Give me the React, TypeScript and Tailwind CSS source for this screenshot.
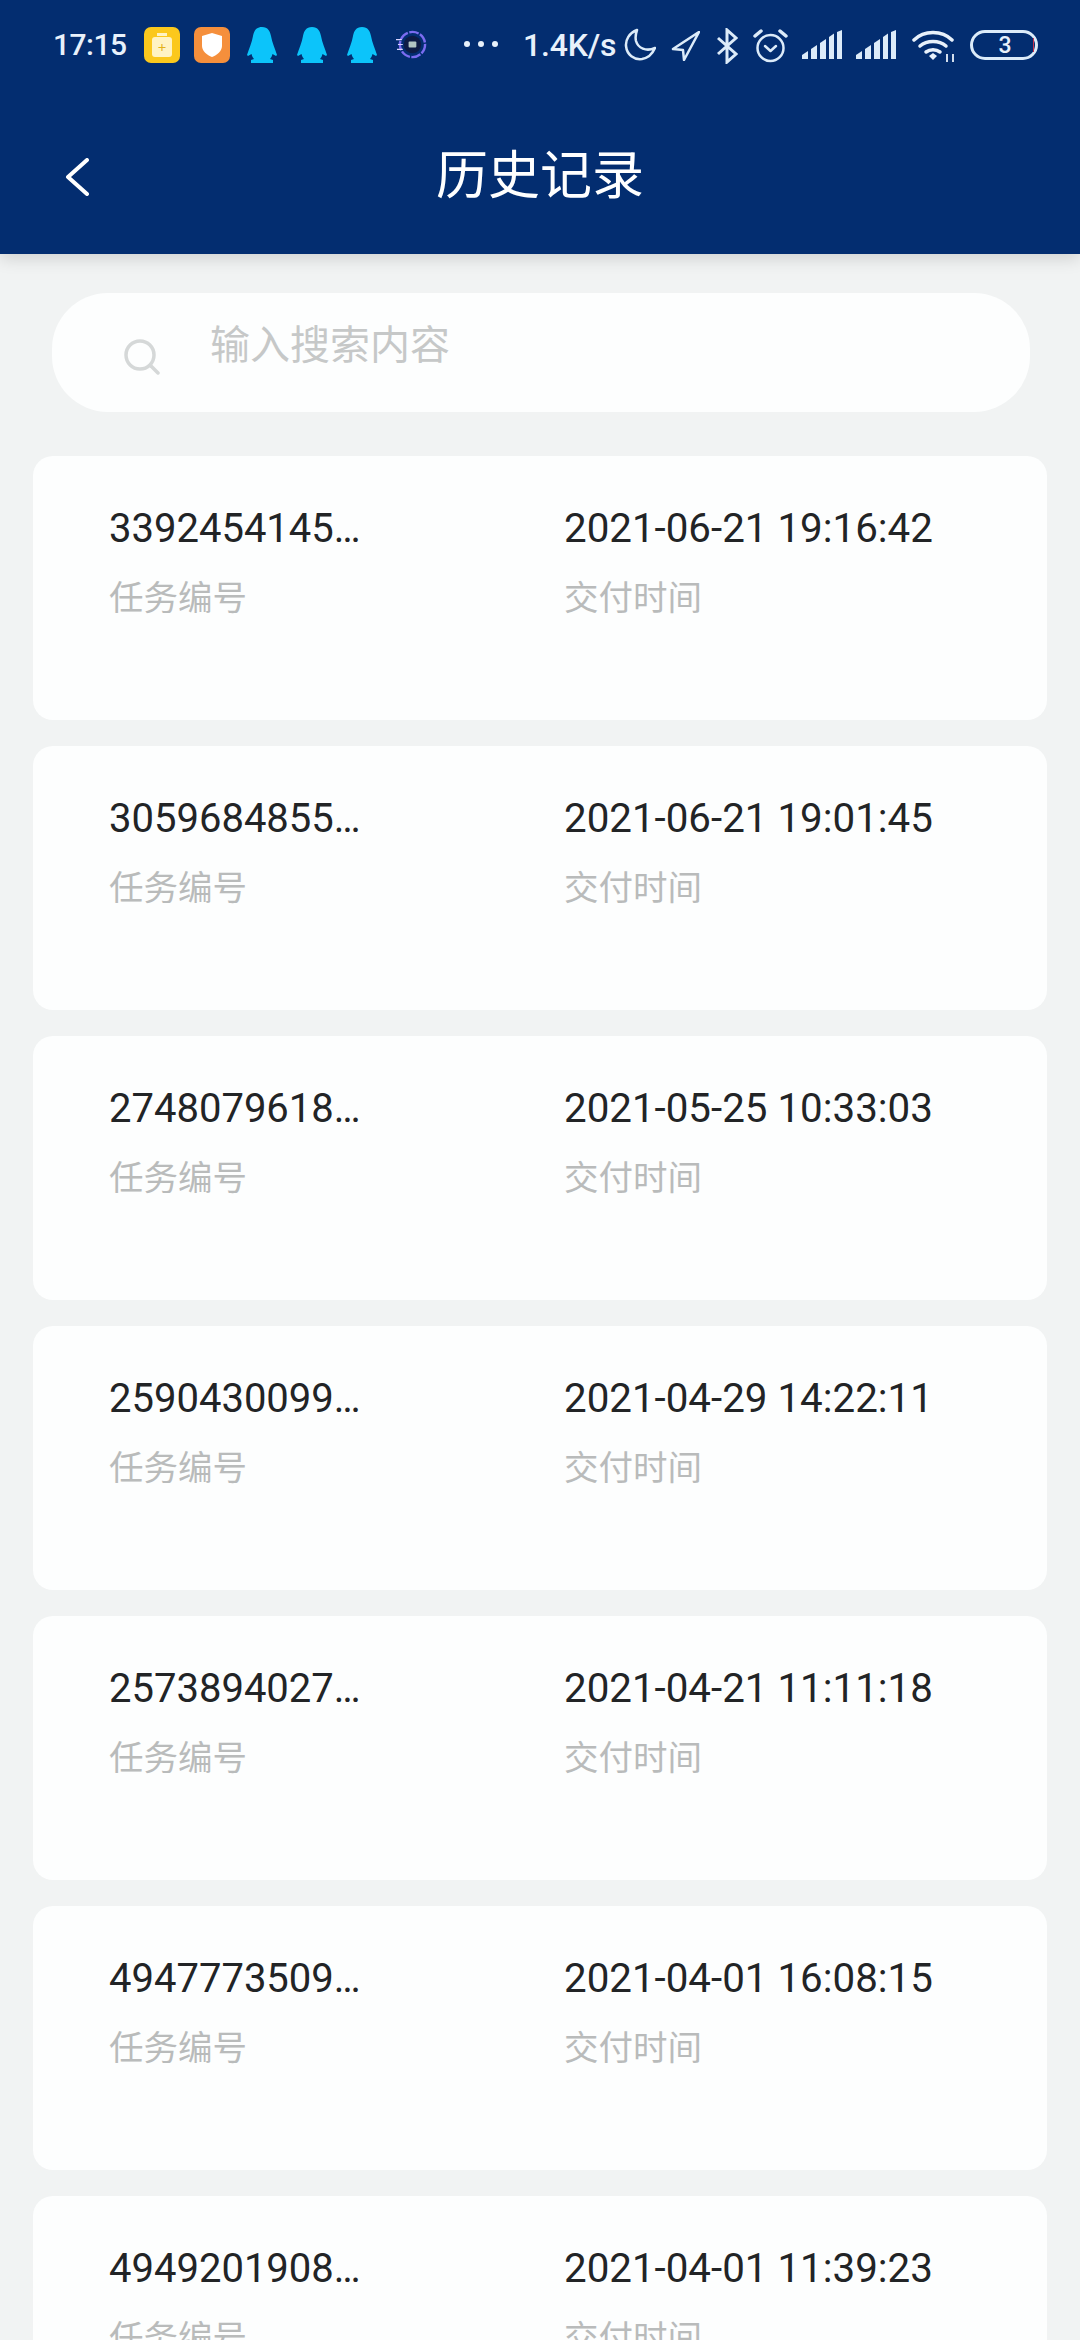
import React from 'react';

const cjk = "font-['Roboto','Noto_Sans_CJK_SC',sans-serif]";
const roboto = "font-['Roboto',sans-serif]";

interface HistoryRecord {
  taskId: string;
  deliveredAt: string;
}

const records: HistoryRecord[] = [
  { taskId: '3392454145…', deliveredAt: '2021-06-21 19:16:42' },
  { taskId: '3059684855…', deliveredAt: '2021-06-21 19:01:45' },
  { taskId: '2748079618…', deliveredAt: '2021-05-25 10:33:03' },
  { taskId: '2590430099…', deliveredAt: '2021-04-29 14:22:11' },
  { taskId: '2573894027…', deliveredAt: '2021-04-21 11:11:18' },
  { taskId: '4947773509…', deliveredAt: '2021-04-01 16:08:15' },
  { taskId: '4949201908…', deliveredAt: '2021-04-01 11:39:23' },
];

const Penguin = () => (
  <svg viewBox="0 0 30 36" className="w-[30px] h-[36px]" fill="#0cc4fa">
    <path d="M15 0C21 0 23 4 24 9C25 15 28 22 30 28L29 29L25.500 27C25 29 24 31 23 32L26 33L26 36L4 36L4 33L7 32C6 31 5 29 4.500 27L1 29L0 28C2 22 5 15 6 9C7 4 9 0 15 0Z" />
  </svg>
);

const Signal = ({ className }: { className: string }) => (
  <svg viewBox="0 0 40 29" className={`w-[40px] h-[29px] mt-[3px] ${className}`} fill="#dcebf9">
    <path d="M0 29V25L6 21V29Z" />
    <path d="M9 29V19L15 15V29Z" />
    <path d="M18 29V13L24 9V29Z" />
    <path d="M27 29V7L32 3.500V29Z" />
    <path d="M35 29V2L40 0V29Z" />
  </svg>
);

const StatusBar = () => (
  <div className="h-[80px] pt-[27px] pl-[53px] flex items-start text-[#e8f1fb]">
    <span className={`text-[30px] leading-[36px] font-medium w-[91px] tracking-[-0.5px] ${roboto}`}>17:15</span>
    <div className="w-[36px] h-[36px] rounded-[7px] bg-[#fbc81d] flex flex-col items-center justify-center">
      <div className="w-[10px] h-[3px] bg-[#fff3c4]" />
      <div className="mt-[1px] w-[20px] h-[20px] rounded-[3px] bg-[#fff3c4] flex items-center justify-center text-[#e3b21a] text-[15px] leading-none">+</div>
    </div>
    <div className="ml-[14px] w-[36px] h-[36px] rounded-[7px] bg-[#f58f3c] flex items-center justify-center">
      <svg viewBox="0 0 20 24" className="w-[20px] h-[24px]" fill="#fff">
        <path d="M10 0l10 3v10c0 5-5 9-10 11C5 22 0 18 0 13V3z" />
      </svg>
    </div>
    <div className="ml-[17px] flex gap-[20px]">
      <Penguin />
      <Penguin />
      <Penguin />
    </div>
    <svg viewBox="0 0 32 32" className="ml-[19px] mt-[2px] w-[31px] h-[31px]" fill="none">
      <circle cx="17" cy="16" r="13" stroke="#7b6cf0" strokeWidth="2.500" strokeDasharray="10 1.500" />
      <circle cx="17" cy="16" r="9" fill="#0e1c45" />
      <path d="M0 11h6M2 16h5M1 21h6" stroke="#d9d4ff" strokeWidth="1.200" />
      <rect x="13" y="13" width="8" height="6" rx="1" fill="#cfe3d8" opacity="0.85" />
    </svg>
    <div className="ml-[37px] mt-[14px] flex gap-[8px]">
      <span className="w-[6px] h-[6px] rounded-full bg-[#e8f1fb]" />
      <span className="w-[6px] h-[6px] rounded-full bg-[#e8f1fb]" />
      <span className="w-[6px] h-[6px] rounded-full bg-[#e8f1fb]" />
    </div>
    <span className={`ml-[25px] w-[91px] text-[32px] leading-[36px] font-medium tracking-[-0.2px] whitespace-nowrap ${roboto}`}>1.4K/s</span>
    <svg viewBox="0 0 32 33" className="ml-[10px] mt-[1px] w-[32px] h-[33px]" fill="none" stroke="#dcebf9" strokeWidth="2.500" strokeLinejoin="round">
      <path d="M13 2C5 5 1.500 12 2 18C3 27 10 32 18 31C24 30 28 27 31 20C22 24 14 20 12 13C11 9 12 5 13 2Z" />
    </svg>
    <svg viewBox="0 0 29 30" className="ml-[15px] mt-[4px] w-[29px] h-[30px]" fill="none" stroke="#dcebf9" strokeWidth="2.500" strokeLinejoin="round">
      <path d="M28 1L2 18L12 19L13 29Z" />
    </svg>
    <svg viewBox="0 0 22 36" className="ml-[16px] mt-[1px] w-[22px] h-[36px]" fill="none" stroke="#dcebf9" strokeWidth="3">
      <path d="M2 10L20 26L11 34V2L20 10L2 26" />
    </svg>
    <svg viewBox="0 0 35 35" className="ml-[15px] mt-[1px] w-[35px] h-[35px]" fill="none" stroke="#dcebf9" strokeWidth="2.500" strokeLinecap="round" strokeLinejoin="round">
      <circle cx="17.500" cy="20" r="13" />
      <path d="M12 18l5.500 5 5.500-5" />
      <path d="M2 8l6-5" strokeWidth="3.500" />
      <path d="M33 8l-6-5" strokeWidth="3.500" />
    </svg>
    <Signal className="ml-[14px]" />
    <Signal className="ml-[14px]" />
    <svg viewBox="0 0 43 33" className="ml-[16px] mt-[3px] w-[43px] h-[33px]" fill="none" stroke="#e8f1fb" strokeWidth="3.500" strokeLinecap="round">
      <path d="M2 10C12 0 30 0 40 10" />
      <path d="M8 16C15 10 27 10 34 16" />
      <path d="M14 22C18 19 24 19 28 22" />
      <path d="M17 26L21 23L25 26L21 30Z" fill="#e8f1fb" stroke="none" />
      <path d="M35 24V32M41 24V32" strokeWidth="1.800" strokeLinecap="butt" />
    </svg>
    <div className="ml-[15px] mt-[3px] w-[68px] h-[30px] rounded-full border-[3px] border-[#dcebf9] flex items-center justify-center">
      <span className={`text-[23px] leading-none font-medium ${roboto}`}>3</span>
      <span className="ml-[21px] mr-[-24px] w-[1px] h-[14px] bg-[#c8344f]" />
    </div>
  </div>
);

const RecordCard = ({ record }: { record: HistoryRecord }) => (
  <div className="shrink-0 h-[264px] rounded-[20px] bg-[#fdfefe] pl-[76px] pt-[51px] flex">
    <div className="w-[455px]">
      <div className={`text-[40px] leading-[44px] text-[#222426] ${roboto}`}>{record.taskId}</div>
      <div className={`mt-[25px] text-[34.500px] leading-[44px] text-[#b9bbbb] ${cjk}`}>任务编号</div>
    </div>
    <div>
      <div className={`text-[40.300px] leading-[44px] text-[#222426] ${roboto}`}>{record.deliveredAt}</div>
      <div className={`mt-[25px] text-[34.500px] leading-[44px] text-[#b9bbbb] ${cjk}`}>交付时间</div>
    </div>
  </div>
);

export default function App() {
  return (
    <div className="w-[1080px] h-[2340px] overflow-hidden bg-[#f1f3f3] flex flex-col">
      <header className="shrink-0 h-[254px] bg-[#032d70] shadow-[0_4px_16px_rgba(0,0,0,0.15)]">
        <StatusBar />
        <div className="h-[174px] pt-[20px] grid grid-cols-[1fr_auto_1fr] items-center">
          <div className="pl-[65px]">
            <svg viewBox="0 0 24 38" className="w-[24px] h-[38px]" fill="none" stroke="#fff" strokeWidth="4" strokeLinecap="round" strokeLinejoin="round">
              <path d="M22 2L3 19L22 36" />
            </svg>
          </div>
          <h1 className={`text-[52px] leading-[60px] text-white ${cjk}`}>历史记录</h1>
          <div />
        </div>
      </header>

      <div className="mt-[39px] ml-[52px] mr-[50px] h-[119px] shrink-0 rounded-[56px] bg-[#fdfefe] flex items-center pl-[72px]">
        <svg viewBox="0 0 36 36" className="mt-[8px] w-[36px] h-[36px]" fill="none" stroke="#d5d8d8" strokeWidth="3.500" strokeLinecap="round">
          <circle cx="16" cy="16" r="14" />
          <path d="M27 27L34 34" />
        </svg>
        <span className={`ml-[50px] mb-[13px] text-[40px] leading-[48px] text-[#c6c8c8] ${cjk}`}>输入搜索内容</span>
      </div>

      <div className="mt-[44px] mx-[33px] flex flex-col gap-[26px]">
        {records.map(record => (
          <RecordCard key={record.taskId} record={record} />
        ))}
      </div>
    </div>
  );
}
